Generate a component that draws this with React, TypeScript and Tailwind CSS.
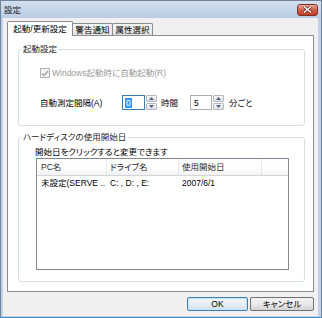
import React from "react";

const font =
  "font-['Liberation_Sans','Noto_Sans_CJK_JP',sans-serif] [font-feature-settings:'palt'] text-[8.5px] leading-[12px]";

const CloseButton = () => (
  <div className="w-[21px] h-[12px] rounded-[3px] border border-[#7d3128] bg-gradient-to-b from-[#e9a89c] via-[#d25c47] to-[#c23a26] flex items-center justify-center">
    <svg width="9" height="7" viewBox="0 0 9 7">
      <path d="M1 0.5 L8 6.5 M8 0.5 L1 6.5" stroke="#5a1f18" strokeWidth="2.6" />
      <path d="M1 0.5 L8 6.5 M8 0.5 L1 6.5" stroke="#ffffff" strokeWidth="1.4" />
    </svg>
  </div>
);

const Spin = () => (
  <div className="w-[11px] h-[15px] flex flex-col gap-px ml-px">
    {["up", "down"].map((d) => (
      <div
        key={d}
        className="flex-1 rounded-[1px] border border-[#b5b8bd] bg-gradient-to-b from-[#f7f7f7] to-[#dfe1e4] flex items-center justify-center"
      >
        <svg width="5" height="3" viewBox="0 0 5 3">
          <path d={d === "up" ? "M0 3 L2.5 0 L5 3Z" : "M0 0 L2.5 3 L5 0Z"} fill="#4d6185" />
        </svg>
      </div>
    ))}
  </div>
);

const Tab = ({ label, active, w }: { label: string; active?: boolean; w: string }) => (
  <div
    className={
      active
        ? `${w} h-[15px] -mb-px relative z-10 bg-white border-t border-x border-[#898c95] rounded-t-[2px] flex items-center justify-center pb-[1px]`
        : `${w} h-[12px] -ml-px bg-gradient-to-b from-[#f4f4f4] to-[#e4e4e4] border-t border-x border-[#898c95] rounded-t-[2px] flex items-center justify-center`
    }
  >
    {label}
  </div>
);

export default function App() {
  return (
    <div
      className={`${font} w-[322px] h-[318px] flex flex-col text-black bg-[#c1d2e7] border border-[#72849b] border-b-[#3d8cc6]`}
    >
      {/* title bar */}
      <div className="h-[17px] flex items-center justify-between pl-[3px] pr-[3px] bg-gradient-to-b from-[#d2dfee] to-[#b9cde4]">
        <span className="text-[#1a1a1a]">設定</span>
        <CloseButton />
      </div>

      <div className="flex-1 flex flex-col bg-[#f0f0f0] ml-[2px] mr-[3px] mb-[1px] pt-[3px] px-[4px]">
        {/* tabs */}
        <div className="h-[14px] flex items-end">
          <Tab label="起動/更新設定" active w="w-[66px]" />
          <Tab label="警告通知" w="w-[41px]" />
          <Tab label="属性選択" w="w-[41px]" />
        </div>

        {/* tab panel */}
        <div className="h-[257px] bg-white border border-[#898c95] pt-[7px] pl-[10px]">
          <fieldset className="w-[287px] h-[83px] border border-[#d5dfe5] rounded-[3px]">
            <legend className="ml-[2px] px-[2px] text-[#1e1e1e]">起動設定</legend>
            <div className="pl-[21px]">
              <div className="mt-[12px] h-[12px] flex items-center gap-[2px] text-[#9a9a9a]">
                <div className="w-[10px] h-[10px] border border-[#b1b1b1] bg-[#f4f4f4] flex items-center justify-center">
                  <svg width="8" height="7" viewBox="0 0 8 7">
                    <path d="M1 3.5 L3 5.5 L7 1" stroke="#a2a2a2" strokeWidth="1.5" fill="none" />
                  </svg>
                </div>
                <span>Windows起動時に自動起動(R)</span>
              </div>
              <div className="mt-[16px] h-[15px] flex items-center">
                <span className="w-[82px]">自動測定間隔(A)</span>
                <div className="w-[23px] h-[15px] border border-[#3d7bad] bg-white flex items-center pl-[2px]">
                  <span className="bg-[#3399ff] text-white px-[1px] leading-[10px]">0</span>
                </div>
                <Spin />
                <span className="ml-[4px] w-[29px]">時間</span>
                <div className="w-[22px] h-[15px] border border-[#abadb3] bg-white flex items-center pl-[3px]">
                  5
                </div>
                <Spin />
                <span className="ml-[5px]">分ごと</span>
              </div>
            </div>
          </fieldset>

          <fieldset className="mt-[5px] w-[287px] h-[151px] border border-[#d5dfe5] rounded-[3px]">
            <legend className="ml-[2px] px-[2px] text-[#1e1e1e]">ハードディスクの使用開始日</legend>
            <div className="pl-[16px]">
              <div className="mt-[3px] h-[12px] flex items-center">開始日をクリックすると変更できます</div>
              <div className="ml-[1px] w-[253px] h-[112px] border border-[#828790] bg-white flex flex-col">
                <div className="h-[17px] flex bg-gradient-to-b from-white via-white to-[#f1f2f4] border-b border-[#d5d5d5] text-[#2a2a2a]">
                  <div className="w-[70px] pl-[4px] flex items-center border-r border-[#e3e5e8]">PC名</div>
                  <div className="w-[72px] pl-[3px] flex items-center border-r border-[#e3e5e8]">ドライブ名</div>
                  <div className="w-[83px] pl-[3px] flex items-center border-r border-[#e3e5e8]">使用開始日</div>
                  <div className="flex-1" />
                </div>
                <div className="h-[14px] flex items-center">
                  <div className="w-[70px] pl-[4px] whitespace-nowrap overflow-hidden">未設定(SERVE ..</div>
                  <div className="w-[72px] pl-[3px] whitespace-nowrap">C: , D: , E:</div>
                  <div className="w-[83px] pl-[3px]">2007/6/1</div>
                </div>
              </div>
            </div>
          </fieldset>
        </div>

        {/* buttons */}
        <div className="mt-[5px] flex justify-end gap-[2px]">
          <button className="w-[61px] h-[14px] rounded-[2px] border border-[#3c7fb1] bg-gradient-to-b from-[#f4f8fb] via-[#e6eef4] to-[#d4dee6] shadow-[inset_0_0_0_1px_#c6e6f8] flex items-center justify-center">
            OK
          </button>
          <button className="w-[64px] h-[14px] rounded-[2px] border border-[#707070] bg-gradient-to-b from-[#f2f2f2] via-[#ebebeb] to-[#d2d2d2] flex items-center justify-center">
            キャンセル
          </button>
        </div>
      </div>
    </div>
  );
}
